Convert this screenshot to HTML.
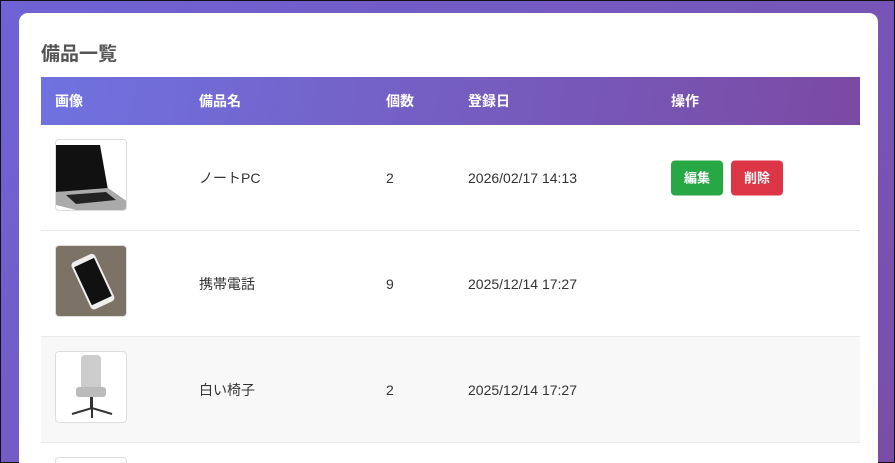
<!DOCTYPE html>
<html><head><meta charset="utf-8"><style>
*{box-sizing:border-box;margin:0;padding:0}
html,body{width:895px;height:463px;overflow:hidden}
body{background:linear-gradient(135deg,#6f63d6,#7a4ea6);font-family:"Liberation Sans","Noto Sans CJK JP",sans-serif;position:relative;border:1px solid #111}
.card{position:absolute;left:18px;top:12px;width:859px;height:451px;background:#fff;border-radius:9px 9px 0 0;overflow:hidden}
h1{position:absolute;left:22px;top:26px;font-size:19px;font-weight:bold;color:#555}
.tbl{position:absolute;left:22px;top:64px;width:819px}
.hd{height:48px;background:linear-gradient(100deg,#6f72e0,#7b4aa3);color:#fff;font-weight:bold;font-size:14px;position:relative}
.hd span,.row span{position:absolute;top:50%;transform:translateY(-50%)}
.row{height:106px;border-bottom:1px solid #e8e8e8;position:relative;font-size:14px;color:#333}
.row.g{background:#f8f8f8}
.img{position:absolute;left:14px;top:14px;width:72px;height:72px;border:1px solid #ddd;border-radius:4px;background:#fff;overflow:hidden}
.c1{left:14px}.c2{left:158px}.c3{left:345px}.c4{left:427px}.c5{left:630px}
.btn{display:inline-block;height:35px;line-height:35px;padding:0 13px;border-radius:4px;color:#fff;font-weight:bold;font-size:13px;font-style:normal}
</style></head><body>
<div class="card">
<h1>備品一覧</h1>
<div class="tbl">
<div class="hd"><span class="c1">画像</span><span class="c2">備品名</span><span class="c3">個数</span><span class="c4">登録日</span><span class="c5">操作</span></div>
<div class="row"><div class="img"><svg width="72" height="72"><polygon points="0,5 44,5 52,50 0,52" fill="#111"/><polygon points="0,52 52,48 72,62 72,72 20,70 0,65" fill="#aaa"/><polygon points="10,55 50,52 60,60 20,64" fill="#222"/></svg></div><span class="c2">ノートPC</span><span class="c3">2</span><span class="c4">2026/02/17 14:13</span><span class="c5"><i class="btn" style="background:#28a745">編集</i><i class="btn" style="background:#dc3545;margin-left:8px">削除</i></span></div>
<div class="row"><div class="img" style="background:#7d7266"><svg width="72" height="72"><g transform="rotate(-25 36 36)"><rect x="24" y="10" width="26" height="52" rx="4" fill="#eee"/><rect x="26" y="15" width="22" height="42" fill="#111"/></g></svg></div><span class="c2">携帯電話</span><span class="c3">9</span><span class="c4">2025/12/14 17:27</span></div>
<div class="row g"><div class="img"><svg width="72" height="72"><rect x="25" y="3" width="20" height="40" rx="4" fill="#ccc"/><rect x="20" y="35" width="30" height="10" rx="3" fill="#bbb"/><rect x="34" y="45" width="3" height="12" fill="#333"/><path d="M16 62 L36 56 L56 62 M36 56 L36 66" stroke="#333" stroke-width="2" fill="none"/></svg></div><span class="c2">白い椅子</span><span class="c3">2</span><span class="c4">2025/12/14 17:27</span></div>
<div class="row"><div class="img"></div></div>
</div></div>
</body></html>
